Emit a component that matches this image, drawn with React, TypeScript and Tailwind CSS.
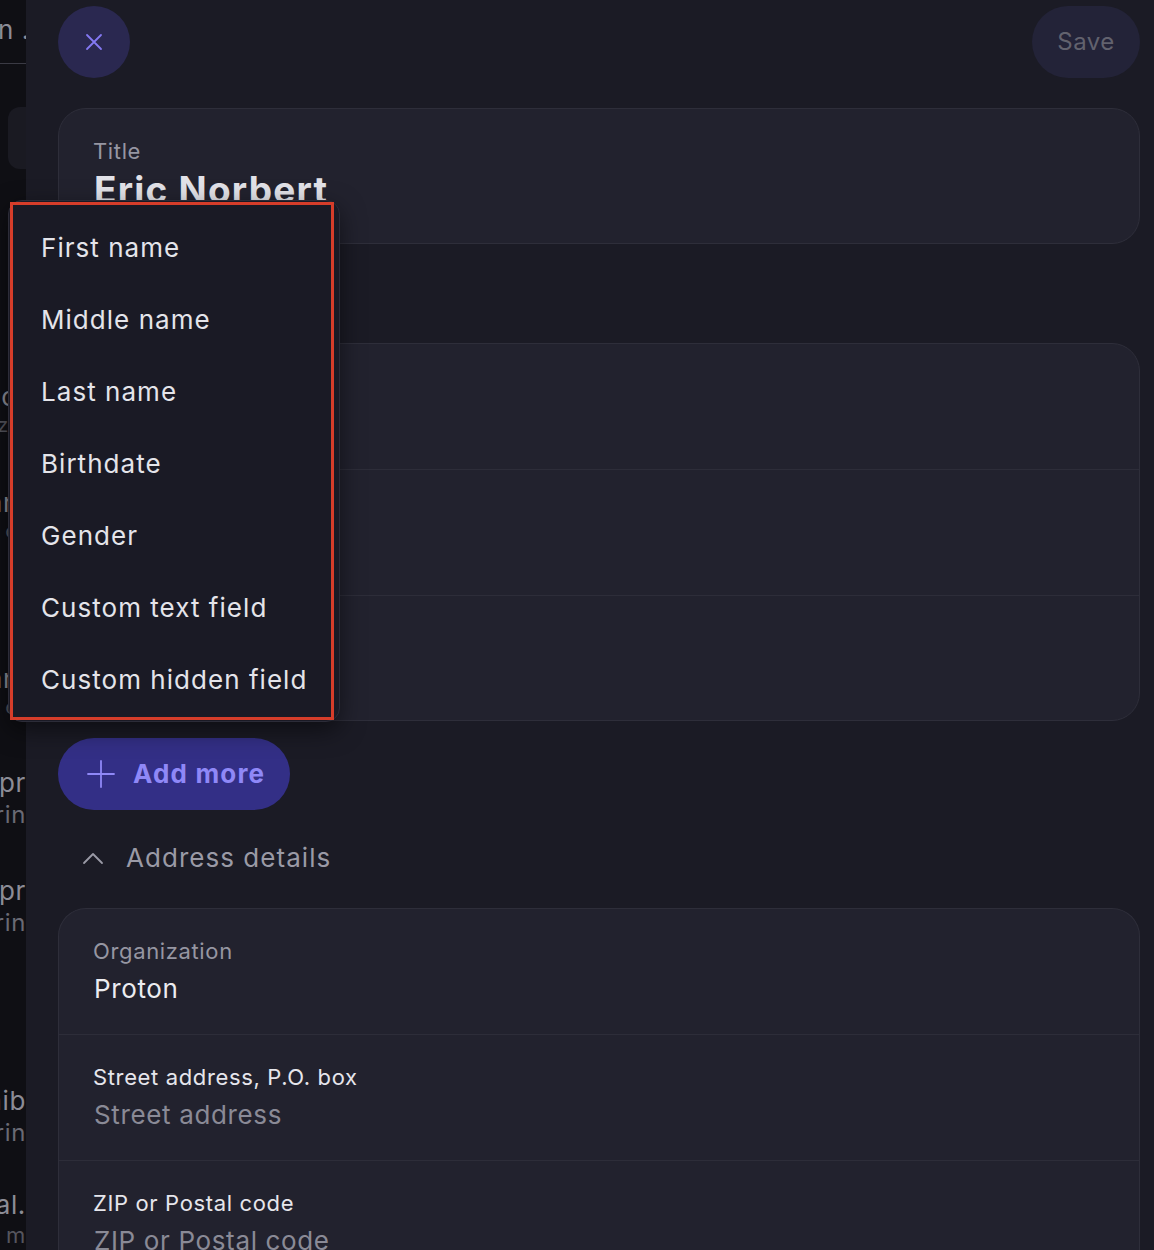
import React from "react";

const font = { fontFamily: "Inter, 'Noto Sans', sans-serif" };

function Row({ label, value, placeholder, labelLight }: { label: string; value?: string; placeholder?: string; labelLight?: boolean }) {
  return (
    <div className="shrink-0 h-[126px] px-[34px] pt-[27px] border-b border-[#2d2d39] last:border-b-0">
      <div className={`text-[22px] leading-[30px] ${labelLight ? "text-[#e6e6ec]" : "text-[#9696a2]"}`}>{label}</div>
      {value ? (
        <div className="text-[26px] leading-[36px] text-[#ececf1] mt-[5px] ml-[1px]">{value}</div>
      ) : (
        <div className="text-[26px] leading-[36px] text-[#8a8a96] mt-[5px] ml-[1px]">{placeholder}</div>
      )}
    </div>
  );
}

export default function App() {
  const items = ["First name", "Middle name", "Last name", "Birthdate", "Gender", "Custom text field", "Custom hidden field"];
  return (
    <div className="relative w-[1154px] h-[1250px] overflow-hidden bg-[#1b1b25] flex tracking-[0.04em]" style={font}>
      {/* background app strip */}
      <div className="w-[26px] shrink-0 bg-[#0f0f14] overflow-hidden flex flex-col items-end text-[#8c8c96] text-[26px]">
        <div className="shrink-0 whitespace-nowrap leading-[36px] mt-[12px] mr-[-4px]">Login .</div>
        <div className="shrink-0 w-full h-px bg-[#3a3a44] mt-[15px]" />
        <div className="shrink-0 w-[18px] self-end h-[62px] rounded-l-[12px] bg-[#1a1a22] mt-[43px]" />
        <div className="shrink-0 whitespace-nowrap leading-[36px] mt-[210px] mr-[-2px]">lor</div>
        <div className="shrink-0 whitespace-nowrap leading-[20px] text-[20px] text-[#55555e]">ziz</div>
        <div className="shrink-0 whitespace-nowrap leading-[36px] mt-[50px]">ani</div>
        <div className="shrink-0 whitespace-nowrap leading-[20px] text-[20px] text-[#55555e]">or</div>
        <div className="shrink-0 whitespace-nowrap leading-[36px] mt-[120px]">ani</div>
        <div className="shrink-0 whitespace-nowrap leading-[20px] text-[20px] text-[#55555e]">or</div>
        <div className="shrink-0 whitespace-nowrap leading-[36px] mt-[48px] text-[#8c8c96]">pr</div>
        <div className="shrink-0 whitespace-nowrap leading-[28px] text-[24px] text-[#6a6a74]">rin</div>
        <div className="shrink-0 whitespace-nowrap leading-[36px] mt-[44px]">pr</div>
        <div className="shrink-0 whitespace-nowrap leading-[28px] text-[24px] text-[#6a6a74]">rin</div>
        <div className="shrink-0 whitespace-nowrap leading-[36px] mt-[146px]">nib</div>
        <div className="shrink-0 whitespace-nowrap leading-[28px] text-[24px] text-[#6a6a74]">rin</div>
        <div className="shrink-0 whitespace-nowrap leading-[36px] mt-[40px]">al.</div>
        <div className="shrink-0 whitespace-nowrap leading-[24px] text-[22px] text-[#55555e]">o m</div>
      </div>

      {/* panel */}
      <div className="flex-1 flex flex-col pl-[32px] pr-[14px] pt-[6px]">
        <div className="shrink-0 flex justify-between items-center h-[72px]">
          <button className="w-[72px] h-[72px] rounded-full bg-[#2a2850] flex items-center justify-center">
            <svg width="20" height="20" viewBox="0 0 20 20" fill="none" stroke="#8479f3" strokeWidth="1.8" strokeLinecap="round">
              <path d="M3 3L17 17M17 3L3 17" />
            </svg>
          </button>
          <button className="h-[72px] w-[108px] rounded-full bg-[#232338] text-[24px] text-[#62626e] tracking-[0.02em]">Save</button>
        </div>

        <div className="shrink-0 mt-[30px] h-[136px] rounded-[28px] bg-[#22222e] border border-[#2e2e3a] px-[34px] pt-[27px]">
          <div className="text-[22px] leading-[30px] text-[#9696a2]">Title</div>
          <div className="text-[37px] leading-[44px] font-bold text-[#e2e2e8] ml-[1px] mt-[2px] tracking-[0.033em]">Eric Norbert</div>
        </div>

        <div className="shrink-0 mt-[99px] h-[378px] rounded-[28px] bg-[#22222e] border border-[#2e2e3a] flex flex-col">
          <div className="h-[126px] border-b border-[#2d2d39]" />
          <div className="h-[126px] border-b border-[#2d2d39]" />
          <div className="flex-1" />
        </div>

        <button className="shrink-0 mt-[17px] self-start h-[72px] w-[232px] rounded-full bg-[#332f86] flex items-center pl-[29px] gap-[18px]">
          <svg width="28" height="28" viewBox="0 0 28 28" fill="none" stroke="#8f88f7" strokeWidth="1.8" strokeLinecap="round">
            <path d="M14 1V27M1 14H27" />
          </svg>
          <span className="text-[26px] font-bold text-[#8f88f7] leading-[36px] tracking-[0.045em]">Add more</span>
        </button>

        <div className="shrink-0 mt-[30px] h-[36px] flex items-center pl-[24px] gap-[22px]">
          <svg width="22" height="14" viewBox="0 0 22 14" fill="none" stroke="#9a9aa6" strokeWidth="1.8" strokeLinecap="round" strokeLinejoin="round">
            <path d="M2 12L11 3L20 12" />
          </svg>
          <span className="text-[26px] text-[#9a9aa6] leading-[36px] tracking-[0.04em]">Address details</span>
        </div>

        <div className="shrink-0 mt-[32px] rounded-t-[28px] bg-[#22222e] border border-[#2e2e3a] border-b-0 flex flex-col h-[400px]">
          <Row label="Organization" value="Proton" />
          <Row label="Street address, P.O. box" placeholder="Street address" labelLight />
          <Row label="ZIP or Postal code" placeholder="ZIP or Postal code" labelLight />
        </div>
      </div>

      {/* dropdown menu */}
      <div className="absolute left-[8px] top-[200px] w-[332px] h-[522px] rounded-[14px] bg-[#1a1a25] border border-[#2c2c38] shadow-[0_8px_24px_rgba(0,0,0,0.5)]">
        <div className="absolute left-[1px] top-[1px] w-[324px] h-[518px] border-[3px] border-[#d63d2a] pointer-events-none" />
        <div className="flex flex-col pt-[10px]">
          {items.map((it) => (
            <div key={it} className="h-[72px] flex items-center pl-[32px] text-[26px] text-[#e4e4ea] whitespace-nowrap tracking-[0.04em]">
              {it}
            </div>
          ))}
        </div>
      </div>
    </div>
  );
}
